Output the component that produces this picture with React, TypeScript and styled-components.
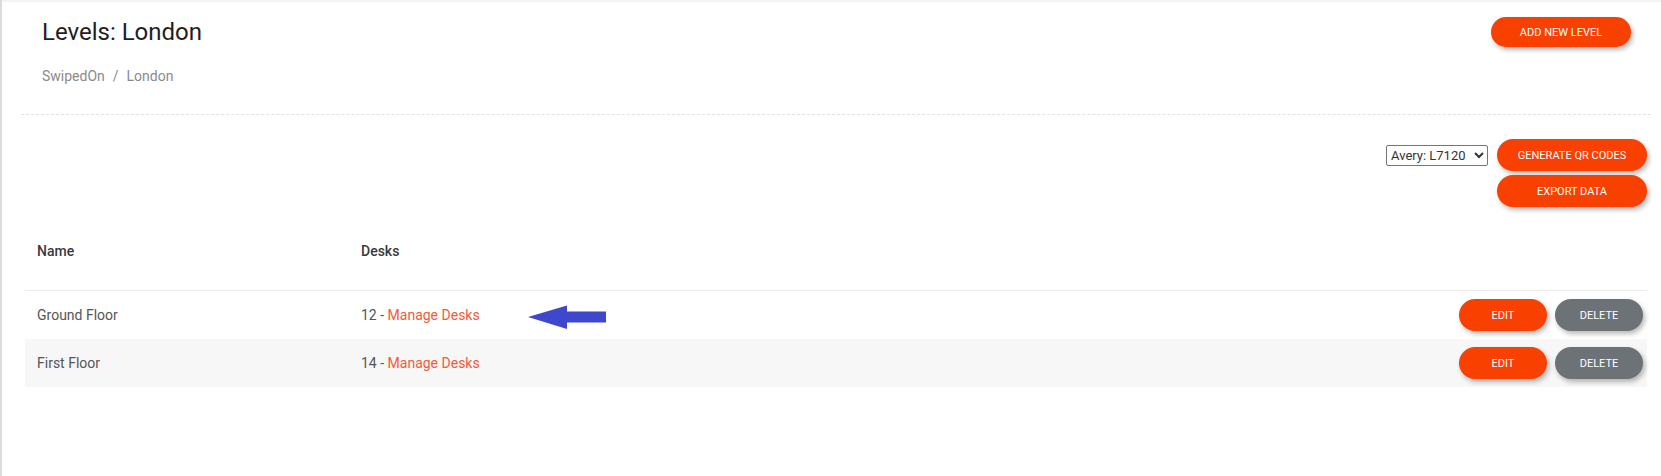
import React from "react";
import styled, { createGlobalStyle } from "styled-components";

const GlobalStyle = createGlobalStyle`
  html, body { margin: 0; padding: 0; background: #ffffff; }
  body { font-family: Roboto, "Liberation Sans", Arial, sans-serif; }
  * { box-sizing: border-box; }
`;

const ORANGE = "#f84000";
const GREY = "#6c7275";

const Page = styled.div`
  position: relative;
  min-height: 476px;
  border-left: 2px solid #dcdcdc;
  background: #fff;
`;

const Main = styled.main`
  border-top: 2px solid #f4f4f4;
  padding-top: 15px;
`;

const PageHeader = styled.header`
  margin: 0 10px 0 19px;
  padding: 0 20px 30px 21px;
  border-bottom: 1px dashed #e2e2e2;
`;

const TitleRow = styled.div`
  display: flex;
  align-items: center;
  justify-content: space-between;
  height: 30px;
`;

const Title = styled.h1`
  margin: 0;
  font-size: 24px;
  font-weight: 400;
  color: #1e1e1e;
  line-height: 28px;
`;

const Breadcrumb = styled.nav`
  margin-top: 21px;
  font-size: 14px;
  line-height: 16px;
  color: #8a8a8a;
  display: flex;
`;

const Sep = styled.span`
  padding: 0 8px;
`;

const PillButton = styled.button<{ $variant?: "primary" | "secondary"; $width: number; $height?: number }>`
  width: ${(p) => p.$width}px;
  height: ${(p) => p.$height ?? 32}px;
  border: none;
  border-radius: 16px;
  background: ${(p) => (p.$variant === "secondary" ? GREY : ORANGE)};
  color: #fff;
  font-family: Roboto, "Liberation Sans", Arial, sans-serif;
  font-size: 11px;
  font-weight: 400;
  text-transform: uppercase;
  box-shadow: 2px 3px 5px rgba(0, 0, 0, 0.28);
  cursor: pointer;
  padding: 0;
`;

const Toolbar = styled.div`
  display: flex;
  justify-content: flex-end;
  margin-top: 24px;
  padding-right: 14px;
`;

const ToolbarGroup = styled.div`
  display: grid;
  grid-template-columns: auto 150px;
  column-gap: 9px;
  row-gap: 4px;
  align-items: center;
`;

const LabelSelect = styled.select`
  height: 21px;
  width: 102px;
  font-family: Roboto, "Liberation Sans", Arial, sans-serif;
  font-size: 13px;
  color: #333;
  border: 1px solid #767676;
  border-radius: 2px;
  background: #fff;
  padding: 0;
`;

const Spacer = styled.div``;

const Table = styled.div`
  margin: 4px 14px 0 23px;
  font-size: 14px;
`;

const Row = styled.div<{ $striped?: boolean; $head?: boolean }>`
  display: grid;
  grid-template-columns: 324px 1fr auto;
  align-items: center;
  min-height: ${(p) => (p.$head ? 80 : 48)}px;
  background: ${(p) => (p.$striped ? "#f7f7f7" : "transparent")};
  border-bottom: ${(p) => (p.$head ? "1px solid #ebebeb" : "none")};
  padding: 0 4px 0 12px;
`;

const HeadCell = styled.div`
  color: #3a3a3a;
  font-weight: 500;
`;

const Cell = styled.div`
  color: #555;
`;

const DeskLink = styled.a`
  color: #f5583a;
  text-decoration: none;
`;

const Actions = styled.div`
  display: flex;
  gap: 8px;
`;

const ArrowMark = styled.svg`
  position: absolute;
  left: 524px;
  top: 305px;
`;

const levels = [
  { name: "Ground Floor", desks: 12 },
  { name: "First Floor", desks: 14 },
];

export default function App() {
  return (
    <>
      <GlobalStyle />
      <Page>
        <Main>
          <PageHeader>
            <TitleRow>
              <Title>Levels: London</Title>
              <PillButton $width={140} $height={30}>
                Add New Level
              </PillButton>
            </TitleRow>
            <Breadcrumb>
              <span>SwipedOn</span>
              <Sep>/</Sep>
              <span>London</span>
            </Breadcrumb>
          </PageHeader>

          <Toolbar>
            <ToolbarGroup>
              <LabelSelect defaultValue="L7120">
                <option value="L7120">Avery: L7120</option>
              </LabelSelect>
              <PillButton $width={150}>Generate QR Codes</PillButton>
              <Spacer />
              <PillButton $width={150}>Export Data</PillButton>
            </ToolbarGroup>
          </Toolbar>

          <Table>
            <Row $head>
              <HeadCell>Name</HeadCell>
              <HeadCell>Desks</HeadCell>
              <div />
            </Row>
            {levels.map((l, i) => (
              <Row key={l.name} $striped={i % 2 === 1}>
                <Cell>{l.name}</Cell>
                <Cell>
                  {l.desks} - <DeskLink href="#">Manage Desks</DeskLink>
                </Cell>
                <Actions>
                  <PillButton $width={88}>Edit</PillButton>
                  <PillButton $width={88} $variant="secondary">
                    Delete
                  </PillButton>
                </Actions>
              </Row>
            ))}
          </Table>
        </Main>
        <ArrowMark width="82" height="26" viewBox="0 0 82 26">
          <polygon points="2,12 41,0.5 41,6.5 80,6.5 80,17.5 41,17.5 41,24" fill="#3f47cc" />
        </ArrowMark>
      </Page>
    </>
  );
}
